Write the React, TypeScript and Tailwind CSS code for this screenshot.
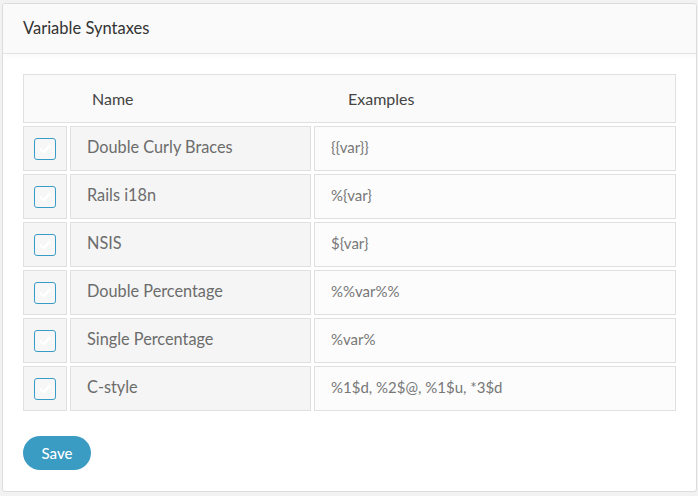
import React from 'react';

const rows = [
  { name: 'Double Curly Braces', example: '{{var}}' },
  { name: 'Rails i18n', example: '%{var}' },
  { name: 'NSIS', example: '${var}' },
  { name: 'Double Percentage', example: '%%var%%' },
  { name: 'Single Percentage', example: '%var%' },
  { name: 'C-style', example: '%1$d, %2$@, %1$u, *3$d' },
];

function Check() {
  return (
    <div className="w-[22px] h-[22px] rounded-[3px] border border-[#3a9cc6] bg-[#f7f7f7] flex items-center justify-center">
      <svg width="14" height="14" viewBox="0 0 14 14" fill="none">
        <path d="M2.5 7.2l3 3 6-6.2" stroke="#ffffff" strokeWidth="2.6" strokeLinecap="round" strokeLinejoin="round" />
      </svg>
    </div>
  );
}

export default function App() {
  return (
    <div className="w-[698px] h-[496px] bg-[#f2f2f2] pt-[3px] pl-[2px] font-['Lato',sans-serif]">
      <div className="w-[695px] h-[489px] bg-white border border-[#dcdcdc] rounded-[3px] flex flex-col overflow-hidden">
        <div className="h-[50px] bg-[#fafafa] border-b border-[#e3e3e3] shadow-[0_2px_6px_rgba(0,0,0,0.03)] flex items-center px-5">
          <h2 className="text-[16.5px] text-[#333]">Variable Syntaxes</h2>
        </div>
        <div className="pt-5 px-5 pb-5">
          <div className="flex flex-col gap-[3px]">
            <div className="h-[49px] bg-[#fafafa] border border-[#e0e0e0] grid grid-cols-[44px_244px_1fr] items-center text-[16px] text-[#444]">
              <span />
              <span className="pl-[24px]">Name</span>
              <span className="pl-[36px]">Examples</span>
            </div>
            {rows.map((r) => (
              <div key={r.name} className="grid grid-cols-[44px_241px_362px] gap-[3px] h-[45px]">
                <div className="bg-[#f5f5f5] border border-[#e0e0e0] flex items-center justify-center">
                  <Check />
                </div>
                <div className="bg-[#f5f5f5] border border-[#e0e0e0] flex items-center pl-4 pb-[2px] text-[16.3px] text-[#6c6c6c]">
                  {r.name}
                </div>
                <div className="bg-[#fcfcfc] border border-[#e0e0e0] flex items-center pl-4 pb-[2px] text-[15px] text-[#777]">
                  {r.example}
                </div>
              </div>
            ))}
          </div>
          <button className="mt-[25px] w-[68px] h-[34px] rounded-full bg-[#3a9bc3] text-white text-[15px] font-medium">
            Save
          </button>
        </div>
      </div>
    </div>
  );
}
